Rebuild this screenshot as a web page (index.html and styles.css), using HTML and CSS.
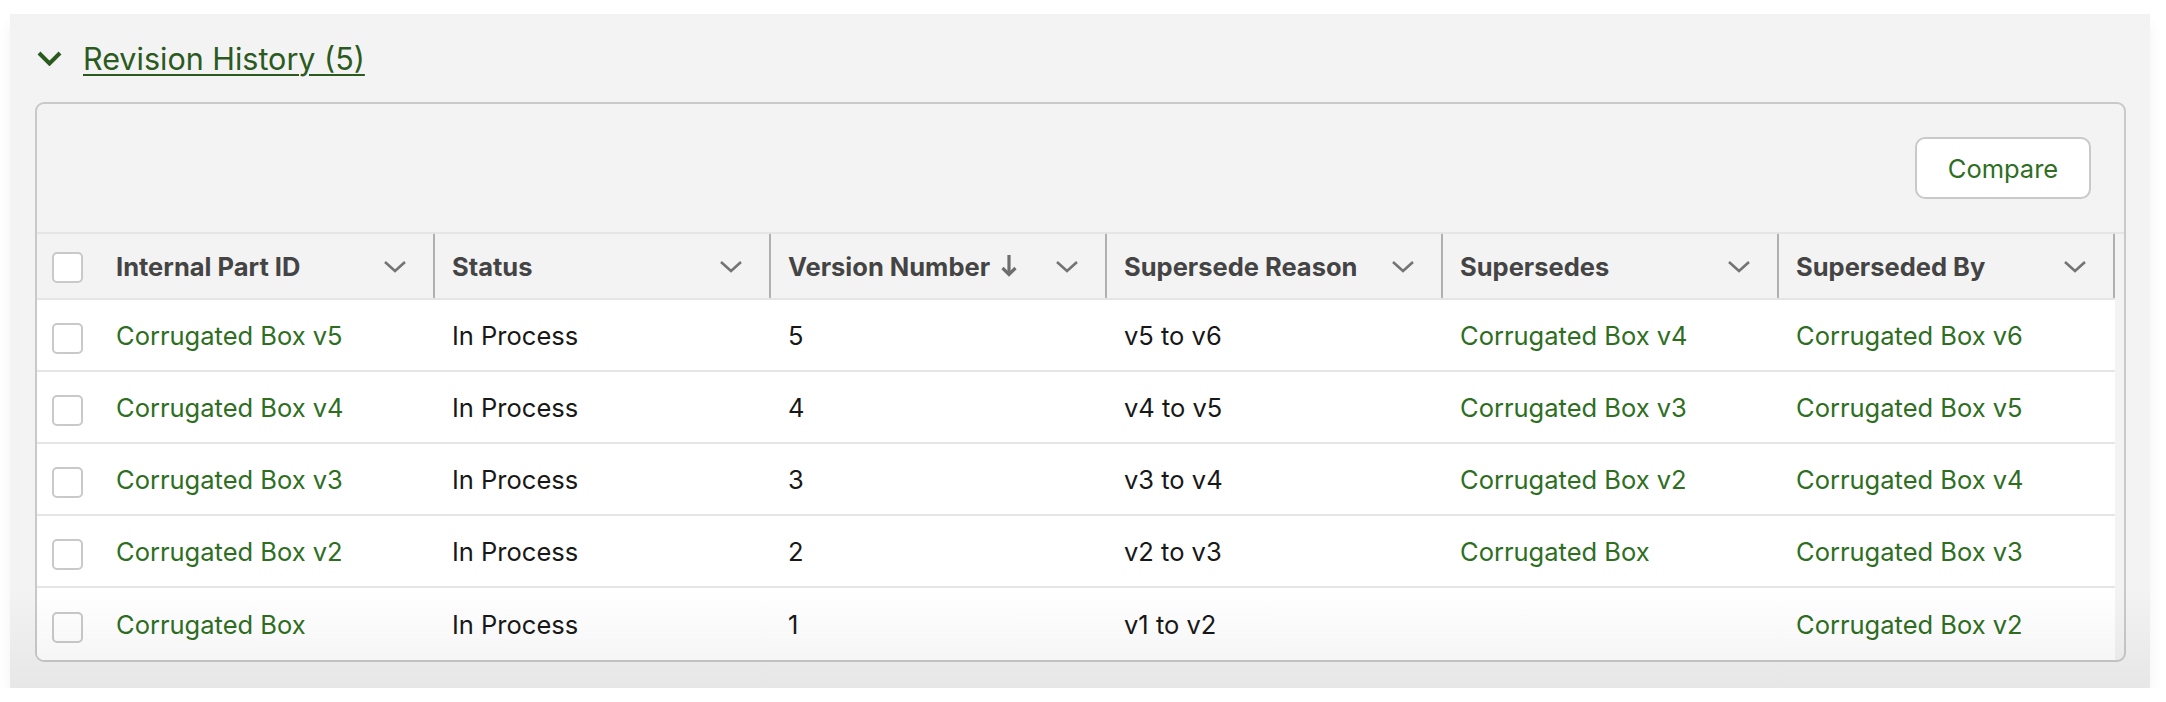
FILE: index.html
```html
<!DOCTYPE html>
<html lang="en">
<head>
  <meta charset="UTF-8" />
  <title>Revision History</title>
  <link rel="stylesheet" href="styles.css">
</head>
<body>
  <div class="panel">
    <div class="panel-head">
      <svg class="toggle" width="25" height="15" viewBox="0 0 25 15">
        <polyline points="2,2 12.5,12.5 23,2" fill="none" stroke="currentColor" stroke-width="4" />
      </svg>
      <a class="panel-title" href="#">Revision History (5)</a>
    </div>

    <div class="card">
      <div class="toolbar">
        <button class="btn">Compare</button>
      </div>

      <div class="grid-wrap">
        <table class="grid">
          <colgroup>
            <col class="col-sel">
            <col class="col">
            <col class="col">
            <col class="col">
            <col class="col">
            <col class="col">
            <col class="col">
          </colgroup>
          <thead>
            <tr>
              <th><div class="sel-cell head"><span class="checkbox"></span></div></th>
              <th><div class="th-inner"><span class="th-label">Internal Part ID</span><svg class="chev" width="24" height="13" viewBox="0 0 24 13"><polyline points="2,2 12,11 22,2" /></svg></div></th>
              <th><div class="th-inner"><span class="th-label">Status</span><svg class="chev" width="24" height="13" viewBox="0 0 24 13"><polyline points="2,2 12,11 22,2" /></svg></div></th>
              <th><div class="th-inner"><span class="th-label">Version Number</span><svg class="sort" width="16" height="22" viewBox="0 0 16 22"><line x1="8" y1="0" x2="8" y2="20" /><polyline points="1.5,13 8,19.5 14.5,13" /></svg><svg class="chev" width="24" height="13" viewBox="0 0 24 13"><polyline points="2,2 12,11 22,2" /></svg></div></th>
              <th><div class="th-inner"><span class="th-label">Supersede Reason</span><svg class="chev" width="24" height="13" viewBox="0 0 24 13"><polyline points="2,2 12,11 22,2" /></svg></div></th>
              <th><div class="th-inner"><span class="th-label">Supersedes</span><svg class="chev" width="24" height="13" viewBox="0 0 24 13"><polyline points="2,2 12,11 22,2" /></svg></div></th>
              <th><div class="th-inner"><span class="th-label">Superseded By</span><svg class="chev" width="24" height="13" viewBox="0 0 24 13"><polyline points="2,2 12,11 22,2" /></svg></div></th>
            </tr>
          </thead>
          <tbody>
            <tr>
              <td><div class="sel-cell"><span class="checkbox"></span></div></td>
              <td><div class="cell"><a href="#">Corrugated Box v5</a></div></td>
              <td><div class="cell">In Process</div></td>
              <td><div class="cell">5</div></td>
              <td><div class="cell">v5 to v6</div></td>
              <td><div class="cell"><a href="#">Corrugated Box v4</a></div></td>
              <td><div class="cell"><a href="#">Corrugated Box v6</a></div></td>
            </tr>
            <tr>
              <td><div class="sel-cell"><span class="checkbox"></span></div></td>
              <td><div class="cell"><a href="#">Corrugated Box v4</a></div></td>
              <td><div class="cell">In Process</div></td>
              <td><div class="cell">4</div></td>
              <td><div class="cell">v4 to v5</div></td>
              <td><div class="cell"><a href="#">Corrugated Box v3</a></div></td>
              <td><div class="cell"><a href="#">Corrugated Box v5</a></div></td>
            </tr>
            <tr>
              <td><div class="sel-cell"><span class="checkbox"></span></div></td>
              <td><div class="cell"><a href="#">Corrugated Box v3</a></div></td>
              <td><div class="cell">In Process</div></td>
              <td><div class="cell">3</div></td>
              <td><div class="cell">v3 to v4</div></td>
              <td><div class="cell"><a href="#">Corrugated Box v2</a></div></td>
              <td><div class="cell"><a href="#">Corrugated Box v4</a></div></td>
            </tr>
            <tr>
              <td><div class="sel-cell"><span class="checkbox"></span></div></td>
              <td><div class="cell"><a href="#">Corrugated Box v2</a></div></td>
              <td><div class="cell">In Process</div></td>
              <td><div class="cell">2</div></td>
              <td><div class="cell">v2 to v3</div></td>
              <td><div class="cell"><a href="#">Corrugated Box</a></div></td>
              <td><div class="cell"><a href="#">Corrugated Box v3</a></div></td>
            </tr>
            <tr>
              <td><div class="sel-cell"><span class="checkbox"></span></div></td>
              <td><div class="cell"><a href="#">Corrugated Box</a></div></td>
              <td><div class="cell">In Process</div></td>
              <td><div class="cell">1</div></td>
              <td><div class="cell">v1 to v2</div></td>
              <td><div class="cell"></div></td>
              <td><div class="cell"><a href="#">Corrugated Box v2</a></div></td>
            </tr>
          </tbody>
        </table>
      </div>
    </div>
  </div>
</body>
</html>
```

FILE: styles.css
```css
body {
  margin: 0;
  padding: 14px 16px 0 10px;
  background: #fff;
  font-family: 'Inter', 'Liberation Sans', sans-serif;
  color: #181818;
}

a {
  color: #2e6e1f;
  text-decoration: none;
}

.panel {
  position: relative;
  background: #f3f3f3;
  padding: 0 24px 26px 25px;
  box-shadow: 0 10px 14px rgba(0, 0, 0, 0.05);
}

/* soft fade along the bottom edge */
.panel::after {
  content: "";
  position: absolute;
  left: 0;
  right: 0;
  bottom: 0;
  height: 100px;
  background: linear-gradient(rgba(0, 0, 0, 0), rgba(0, 0, 0, 0.05));
  pointer-events: none;
}

.panel-head {
  height: 88px;
  display: flex;
  align-items: center;
  gap: 21px;
  padding-left: 2px;
  color: #2b5a1e;
}

.panel-title {
  font-size: 30.5px;
  color: #2b5a1e;
  text-decoration: underline;
  text-decoration-thickness: 2px;
  text-underline-offset: 4px;
}

.card {
  background: #f3f3f3;
  border: 2px solid #c9c9c9;
  border-radius: 9px;
  overflow: hidden;
}

.toolbar {
  height: 128px;
  display: flex;
  justify-content: flex-end;
  align-items: center;
  padding-right: 33px;
  border-bottom: 2px solid #e5e5e5;
}

.btn {
  width: 176px;
  height: 62px;
  background: #fff;
  border: 2px solid #c9c9c9;
  border-radius: 10px;
  font-family: inherit;
  font-size: 25.5px;
  color: #2e6e1f;
}

.grid-wrap {
  padding-right: 9px;
}

.grid {
  width: 2078px;
  table-layout: fixed;
  border-collapse: separate;
  border-spacing: 0;
}

.col-sel {
  width: 62px;
}

.col {
  width: 336px;
}

.grid th,
.grid td {
  padding: 0;
  text-align: left;
  white-space: nowrap;
}

.grid th {
  background: #f3f3f3;
  border-bottom: 2px solid #e5e5e5;
}

.th-inner {
  height: 64px;
  display: flex;
  align-items: center;
  padding: 0 26px 0 17px;
  border-right: 2px solid #b0b0b0;
  box-sizing: border-box;
}

.th-label {
  font-size: 25.5px;
  font-weight: 700;
  color: #444;
}

.chev {
  margin-left: auto;
  flex: none;
}

.chev polyline {
  fill: none;
  stroke: #747474;
  stroke-width: 2.6;
}

.sort line,
.sort polyline {
  fill: none;
  stroke: #6e6e6e;
  stroke-width: 3.2;
}

.sort {
  margin-left: 11px;
  flex: none;
}

.grid td {
  background: #fff;
  border-bottom: 2px solid #e5e5e5;
}

.grid tbody tr:last-child td {
  border-bottom: none;
}

.cell,
.sel-cell {
  height: 70px;
  display: flex;
  align-items: center;
  font-size: 25.5px;
}

.grid tbody tr:last-child .cell,
.grid tbody tr:last-child .sel-cell {
  height: 72px;
}

.cell {
  padding-left: 17px;
}

.sel-cell {
  padding-left: 15px;
  padding-top: 6px;
  box-sizing: border-box;
}

.sel-cell.head {
  height: 64px;
  padding-top: 3px;
}

.checkbox {
  display: block;
  width: 31px;
  height: 31px;
  box-sizing: border-box;
  background: #fff;
  border: 2px solid #c9c9c9;
  border-radius: 5px;
}
```
